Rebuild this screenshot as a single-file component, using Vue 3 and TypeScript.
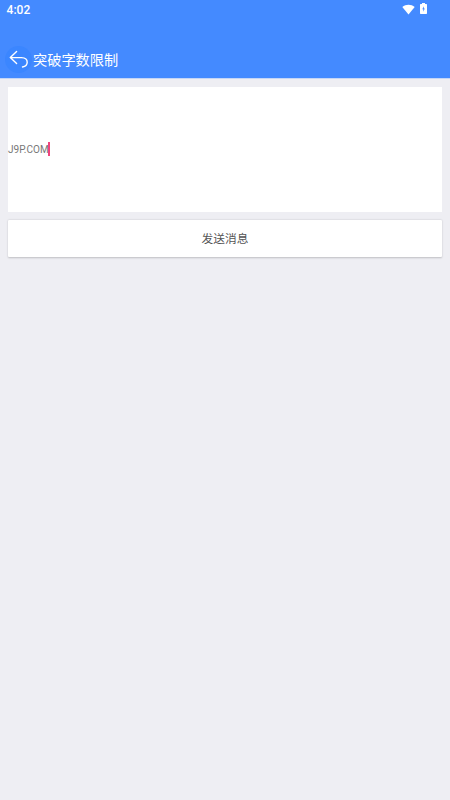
<script setup lang="ts">
import { ref } from 'vue'

const time = ref('4:02')
const title = ref('突破字数限制')
const message = ref('J9P.COM')
const action = ref('发送消息')
</script>

<template>
  <div class="screen">
    <header class="header">
      <div class="status">
        <span class="time">{{ time }}</span>
        <div class="indicators">
          <svg class="wifi" width="13" height="11" viewBox="0 0 13 11">
            <path d="M6.5 10.6 0.3 3C3.9-.1 9.1-.1 12.7 3Z" fill="#fff" />
          </svg>
          <svg class="battery" width="7" height="11" viewBox="0 0 7 11">
            <path d="M2 0h3v1h1.3q.7 0 .7.7v8.6q0 .7-.7.7H.7Q0 11 0 10.300V1.700Q0 1 .7 1H2Z" fill="#fff" />
            <path d="M3.900 3.200 2.300 6.300h1v2.500L4.800 5.600H3.900Z" fill="#448aff" />
          </svg>
        </div>
      </div>
      <div class="toolbar">
        <button class="back" aria-label="返回">
          <svg width="20" height="20" viewBox="0 0 20 20" fill="none" stroke="#fff" stroke-width="1.4" stroke-linecap="round" stroke-linejoin="round">
            <path d="M7.600 2.600 1.300 8.600 7.600 14.500M1.300 8.600H12.600Q18.200 8.800 18.200 13.300Q18.100 17.300 13.500 18" />
          </svg>
        </button>
        <h1 class="title">{{ title }}</h1>
      </div>
    </header>
    <main class="content">
      <div class="editor">
        <span class="message">{{ message }}</span>
        <span class="caret"></span>
      </div>
      <button class="send">{{ action }}</button>
    </main>
  </div>
</template>

<style>
body {
  margin: 0;
  background: #eeeef3;
}
</style>

<style scoped>
.screen {
  box-sizing: border-box;
  width: 100%;
  height: 800px;
  overflow: hidden;
  background: #eeeef3;
  font-family: Roboto, "Noto Sans CJK SC", sans-serif;
}

.header {
  box-sizing: border-box;
  height: 79px;
  border-bottom: 1px solid #c5d6f6;
  background: #448aff;
  color: #fff;
}

.status {
  display: flex;
  justify-content: space-between;
  box-sizing: border-box;
  height: 40px;
  padding: 3px 23px 0 6.600px;
}

.time {
  font-size: 12px;
  line-height: 14px;
  font-weight: 500;
}

.indicators {
  display: flex;
  gap: 5px;
}

.wifi {
  margin-top: 1px;
}

.toolbar {
  display: flex;
  align-items: center;
  height: 38px;
  padding-left: 5px;
}

.back {
  display: flex;
  align-items: center;
  justify-content: center;
  width: 27px;
  height: 27px;
  padding: 0;
  border: 0;
  border-radius: 50%;
  background: #3b86ff;
}

.title {
  margin: 0 0 0 1px;
  padding-top: 2px;
  font-size: 14.200px;
  line-height: 20px;
  font-weight: 400;
}

.content {
  display: flex;
  flex-direction: column;
  gap: 8px;
  padding: 7.500px 8px 0;
}

.editor {
  display: flex;
  align-items: center;
  height: 125px;
  background: #fff;
}

.message {
  padding-top: 1px;
  font-size: 10px;
  line-height: 14px;
  color: #777;
}

.caret {
  width: 2px;
  height: 14px;
  margin-left: -1px;
  background: #f0447c;
}

.send {
  box-sizing: border-box;
  height: 37.500px;
  padding: 2px 0 0;
  border: 0;
  border-radius: 1px;
  background: #fff;
  box-shadow: 0 0.500px 2px rgba(0, 0, 0, 0.2);
  font: 400 11.700px/18px Roboto, "Noto Sans CJK SC", sans-serif;
  color: #555;
}
</style>
